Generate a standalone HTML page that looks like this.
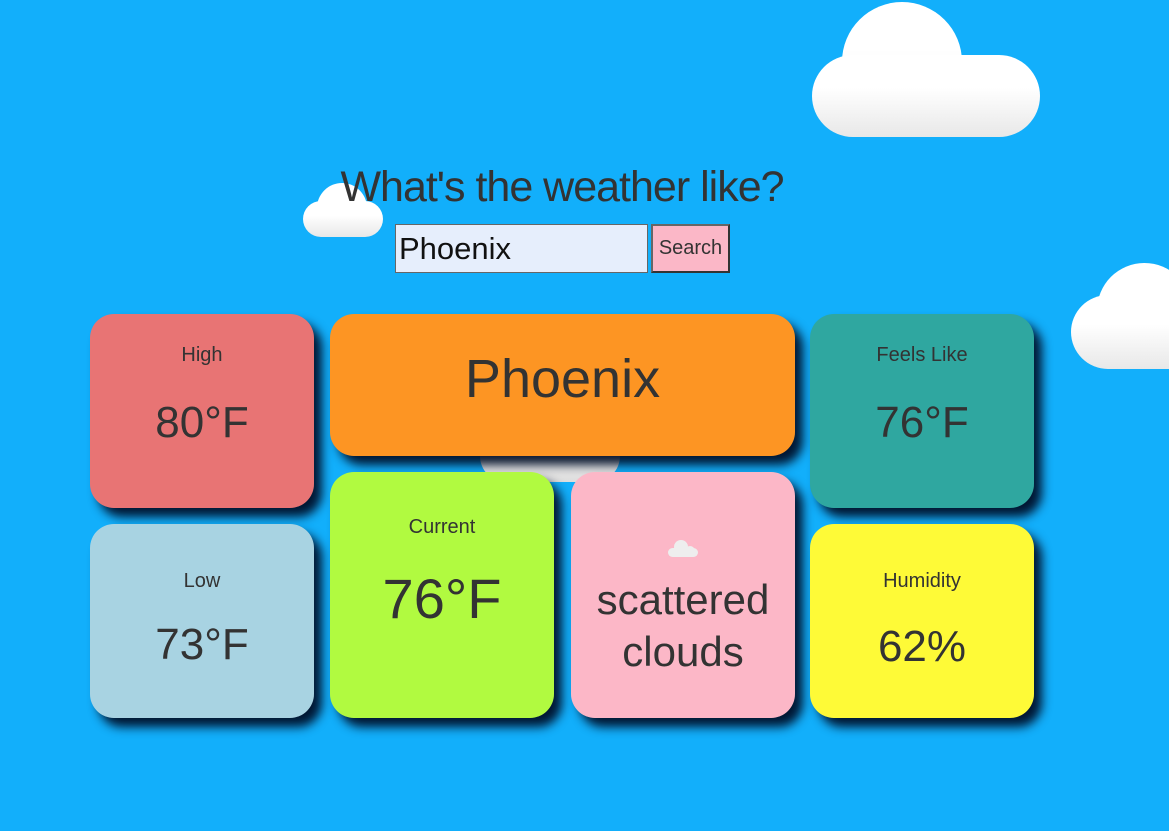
<!DOCTYPE html>
<html><head><meta charset="utf-8"><style>
*{box-sizing:border-box;margin:0;padding:0}
body{width:1169px;height:831px;background:#12affb;overflow:hidden;position:relative;font-family:"Liberation Sans",sans-serif;color:#333}
.cloud{position:absolute}
.cloud div{position:absolute;background:linear-gradient(#fff 40%,#e8e8e8);border-radius:50%}
.card{position:absolute;border-radius:24px;box-shadow:8px 9px 10px rgba(0,15,40,.95);text-align:center}
.lbl{font-size:20px;position:absolute;width:100%;left:0}
.val{font-size:44px;position:absolute;width:100%;left:0}
h1{position:absolute;left:0;width:1124px;text-align:center;top:163px;font-weight:normal;font-size:43px;color:#333;letter-spacing:-1px}
input{position:absolute;left:395px;top:224px;width:253px;height:49px;background:#e6eefc;border:1px solid #666;font-family:"Liberation Sans",sans-serif;font-size:31px;padding-left:3px;color:#111}
button{position:absolute;left:651px;top:224px;width:79px;height:49px;background:#fbb7c7;border:2px solid #333;border-top-color:#666;border-left-color:#666;font-family:"Liberation Sans",sans-serif;font-size:20px;color:#333}
</style></head><body>
<div class="cloud" style="left:812px;top:0;width:228px;height:138px">
<div style="left:30px;top:2px;width:120px;height:120px"></div>
<div style="left:0;top:55px;width:228px;height:82px;border-radius:41px"></div>
</div>
<div class="cloud" style="left:303px;top:183px;width:80px;height:54px">
<div style="left:14px;top:0;width:50px;height:50px"></div>
<div style="left:0;top:18px;width:80px;height:36px;border-radius:18px"></div>
</div>
<div class="cloud" style="left:1071px;top:263px;width:130px;height:106px">
<div style="left:26px;top:0;width:95px;height:95px"></div>
<div style="left:0;top:32px;width:140px;height:74px;border-radius:37px"></div>
</div>
<div style="position:absolute;left:480px;top:430px;width:140px;height:52px;border-radius:26px;background:linear-gradient(#fff,#ddd)"></div>
<h1>What's the weather like?</h1>
<input value="Phoenix"><button>Search</button>

<div class="card" style="left:90px;top:314px;width:224px;height:194px;background:#e87474">
<div class="lbl" style="top:30px">High</div><div class="val" style="top:84px">80°F</div></div>
<div class="card" style="left:330px;top:314px;width:465px;height:142px;background:#fd9523">
<div class="val" style="top:34px;font-size:54px">Phoenix</div></div>
<div class="card" style="left:810px;top:314px;width:224px;height:194px;background:#2fa7a0">
<div class="lbl" style="top:30px">Feels Like</div><div class="val" style="top:84px">76°F</div></div>
<div class="card" style="left:90px;top:524px;width:224px;height:194px;background:#a8d3e2">
<div class="lbl" style="top:46px">Low</div><div class="val" style="top:96px">73°F</div></div>
<div class="card" style="left:330px;top:472px;width:224px;height:246px;background:#b1fa40">
<div class="lbl" style="top:44px">Current</div><div class="val" style="top:94px;font-size:56px">76°F</div></div>
<div class="card" style="left:571px;top:472px;width:224px;height:246px;background:#fcb7c7">
<svg style="position:absolute;left:96px;top:66px" width="32" height="20" viewBox="0 0 32 20"><circle cx="14" cy="9" r="7" fill="#eee"/><rect x="1" y="10" width="30" height="9" rx="4.5" fill="#eee"/><circle cx="23" cy="13" r="5" fill="#eee"/></svg>
<div class="val" style="top:102px;font-size:42px;line-height:52px">scattered<br>clouds</div></div>
<div class="card" style="left:810px;top:524px;width:224px;height:194px;background:#fefa37">
<div class="lbl" style="top:46px">Humidity</div><div class="val" style="top:98px">62%</div></div>
</body></html>
